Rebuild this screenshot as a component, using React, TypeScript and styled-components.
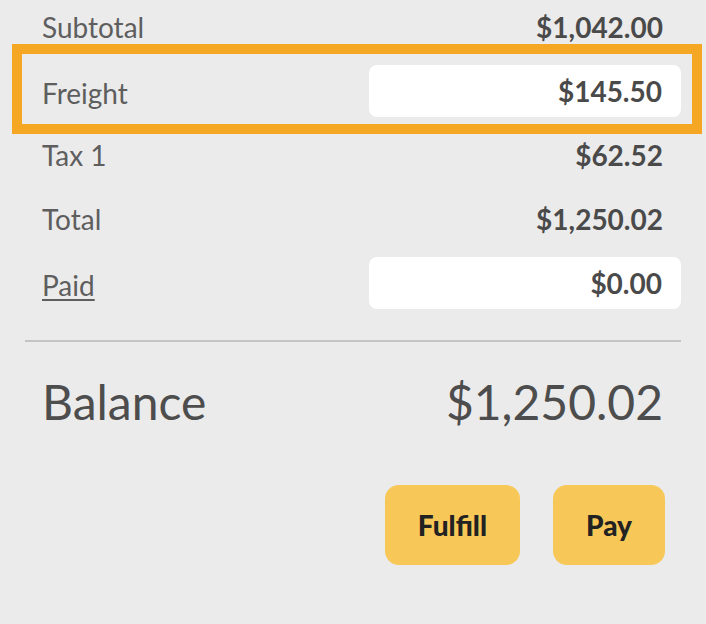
import React from 'react';
import styled, { createGlobalStyle } from 'styled-components';

const GlobalStyle = createGlobalStyle`
  html, body {
    margin: 0;
    padding: 0;
    background: #ebebeb;
  }
  body {
    font-family: Lato, "Open Sans", sans-serif;
  }
`;

const lineas = [
  { label: 'Tax 1', value: '$62.52' },
];

const App: React.FC = () => {
  return (
    <>
      <GlobalStyle />
      <Panel>
        <FirstRow>
          <Label>Subtotal</Label>
          <Value>$1,042.00</Value>
        </FirstRow>

        <Highlight>
          <HighlightRow>
            <Label offset>Freight</Label>
            <AmountInput readOnly value="$145.50" />
          </HighlightRow>
        </Highlight>

        {lineas.map((l) => (
          <TaxRow key={l.label}>
            <Label>{l.label}</Label>
            <Value>{l.value}</Value>
          </TaxRow>
        ))}

        <Row>
          <Label>Total</Label>
          <Value>$1,250.02</Value>
        </Row>

        <Row>
          <LinkLabel href="#">Paid</LinkLabel>
          <AmountInput readOnly value="$0.00" />
        </Row>

        <Divider />

        <BalanceRow>
          <BalanceText>Balance</BalanceText>
          <BalanceText>$1,250.02</BalanceText>
        </BalanceRow>

        <ButtonRow>
          <ActionButton>Fulfill</ActionButton>
          <ActionButton>Pay</ActionButton>
        </ButtonRow>
      </Panel>
    </>
  );
};

export default App;

const Panel = styled.div`
  width: 706px;
  height: 624px;
  background: #ebebeb;
  display: flex;
  flex-direction: column;
  overflow: hidden;
`;

const Row = styled.div`
  display: flex;
  align-items: center;
  justify-content: space-between;
  height: 64px;
  padding: 0 25px 0 42px;
  flex-shrink: 0;
  box-sizing: border-box;
`;

const FirstRow = styled(Row)`
  height: 44px;
  padding-top: 10px;
`;

const TaxRow = styled(Row)`
  height: 53px;
  padding-bottom: 11px;
`;

const Highlight = styled.div`
  margin: 0 4px 0 12px;
  border: 10px solid #f5a623;
  height: 90px;
  box-sizing: border-box;
  flex-shrink: 0;
`;

const HighlightRow = styled.div`
  display: flex;
  align-items: center;
  justify-content: space-between;
  height: 100%;
  padding: 4px 11px 0 20px;
  box-sizing: border-box;
`;

const Label = styled.span<{ offset?: boolean }>`
  font-size: 28px;
  color: #5e5e5e;
  margin-top: ${({ offset }) => (offset ? '4px' : '0')};
`;

const LinkLabel = styled.a`
  font-size: 28px;
  color: #5e5e5e;
  text-decoration: underline;
  text-decoration-thickness: 2px;
  text-underline-offset: 3px;
  margin-top: 4px;
`;

const Value = styled.span`
  font-size: 28px;
  font-weight: 700;
  color: #4a4a4a;
  padding-right: 18px;
`;

const AmountInput = styled.input`
  width: 312px;
  height: 52px;
  box-sizing: border-box;
  border: none;
  border-radius: 8px;
  background: #ffffff;
  padding: 0 19px 0 10px;
  text-align: right;
  font-family: Lato, "Open Sans", sans-serif;
  font-size: 28px;
  font-weight: 700;
  color: #4a4a4a;
  outline: none;
`;

const Divider = styled.hr`
  margin: 25px 25px 0 25px;
  border: none;
  height: 2px;
  background: #c4c4c4;
  flex-shrink: 0;
`;

const BalanceRow = styled.div`
  display: flex;
  justify-content: space-between;
  align-items: center;
  padding: 31px 43px 0 42px;
  flex-shrink: 0;
`;

const BalanceText = styled.span`
  font-size: 48px;
  font-weight: 400;
  color: #4d4d4d;
  line-height: 58px;
`;

const ButtonRow = styled.div`
  display: flex;
  justify-content: flex-end;
  gap: 33px;
  padding: 54px 41px 0 0;
  flex-shrink: 0;
`;

const ActionButton = styled.button`
  height: 80px;
  padding: 0 33px;
  border: none;
  border-radius: 14px;
  background: #f7c857;
  font-family: Lato, "Open Sans", sans-serif;
  font-size: 28px;
  font-weight: 900;
  color: #222222;
  cursor: pointer;
`;
